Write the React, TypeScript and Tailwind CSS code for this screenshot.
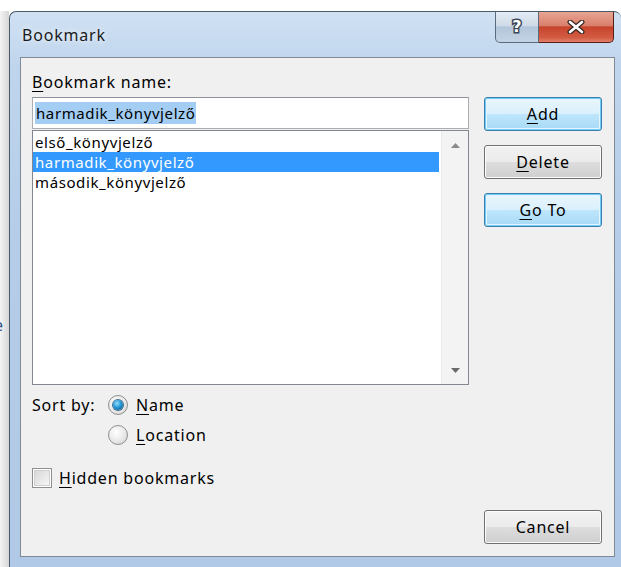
import { useState } from "react";

const bookmarks = ["első_könyvjelző", "harmadik_könyvjelző", "második_könyvjelző"];

// accelerator letter, underlined like a Win32 mnemonic
function Acc({ children }: { children: string }) {
  return <u className="underline decoration-1 underline-offset-[3px]">{children}</u>;
}

function Button({
  children,
  focused = false,
}: {
  children: React.ReactNode;
  focused?: boolean;
}) {
  return (
    <button
      className={
        focused
          ? "h-[34px] w-full rounded-[3px] border border-[#3c7fb1] bg-[linear-gradient(#eaf6fd_0%,#d9f0fc_50%,#bee6fd_51%,#a7d9f5_100%)] text-[16px] tracking-[0.8px] text-black shadow-[inset_0_0_0_1px_#6fcdf5,inset_0_0_0_2px_#e6f5fc]"
          : "h-[34px] w-full rounded-[3px] border border-[#707070] bg-[linear-gradient(#f2f2f2_0%,#ebebeb_50%,#dddddd_51%,#cfcfcf_100%)] text-[16px] tracking-[0.8px] text-black shadow-[inset_0_0_0_1px_#fcfcfc]"
      }
    >
      {children}
    </button>
  );
}

function Radio({ checked, label }: { checked: boolean; label: React.ReactNode }) {
  return (
    <div className="flex h-[20px] items-center gap-[8px]">
      <span className="flex h-[20px] w-[20px] items-center justify-center rounded-full border border-[#8e8f8f] bg-[radial-gradient(circle_at_40%_35%,#ffffff,#e6e6e6_60%,#c8c8c8)]">
        {checked && (
          <span className="h-[10px] w-[10px] rounded-full bg-[radial-gradient(circle_at_40%_35%,#8fe0ff,#1f8fcf_50%,#0b4f7d)] shadow-[0_0_0_1px_#3d6f8f]" />
        )}
      </span>
      <span>{label}</span>
    </div>
  );
}

export default function App() {
  const [selected, setSelected] = useState(1);
  const [sort, setSort] = useState("name");

  return (
    <div className="flex h-[567px] w-[621px] flex-col overflow-hidden bg-white font-['Noto_Sans',sans-serif] text-[16px] leading-[20px] tracking-[0.8px] text-black">
      <div className="h-[11px] shrink-0 bg-white" />
      <div className="flex flex-1">
        {/* page behind the dialog, mostly hidden by the drop shadow */}
        <div className="w-[9px] shrink-0 overflow-hidden bg-[linear-gradient(90deg,#f4f4f4,#d6d6d6)] pt-[304px]">
          <span className="-ml-[6px] block text-[#2b4f86]">e</span>
        </div>

        {/* dialog window */}
        <div className="flex flex-1 flex-col rounded-t-[7px] border border-b-0 border-r-0 border-[#4b5a6a] bg-[linear-gradient(180deg,#d0e1f3_0%,#bfd5ed_10%,#b5cde9_40%,#afc9e6_100%)]">
          {/* title bar */}
          <div className="flex h-[45px] shrink-0 justify-between">
            <div className="pl-[12px] pt-[13px] text-[#1b1b1b] [text-shadow:0_0_6px_#ffffff]">
              Bookmark
            </div>
            <div className="mr-[7px] flex h-[31px]">
              <div className="flex w-[44px] items-center justify-center rounded-bl-[5px] border border-t-0 border-[#5b6b7c] bg-[linear-gradient(#e3ebf4_0%,#cfdbe8_45%,#b3c5d9_50%,#c4d4e4_100%)] font-['DejaVu_Sans',sans-serif] text-[16px] font-bold tracking-normal text-white [-webkit-text-stroke:3px_#3c4856] [paint-order:stroke_fill]">
                ?
              </div>
              <div className="flex w-[75px] items-center justify-center rounded-br-[5px] border border-l-0 border-t-0 border-[#5a1e16] bg-[linear-gradient(#e8a493_0%,#d9806c_45%,#c7432c_50%,#d25c42_85%,#e0806a_100%)]">
                <svg width="20" height="14" viewBox="0 0 20 14">
                  <path d="M4 2 L16 12 M16 2 L4 12" stroke="#3a2622" strokeWidth="5" strokeLinecap="round" />
                  <path d="M4 2 L16 12 M16 2 L4 12" stroke="#ffffff" strokeWidth="2.6" strokeLinecap="round" />
                </svg>
              </div>
            </div>
          </div>

          {/* client area */}
          <div className="ml-[10px] flex h-[500px] w-[595px] flex-col border border-[#7f8a96] bg-[#f0f0f0] pb-[12px] pl-[11px] pt-[14px]">
            <div className="mb-[5px]">
              <Acc>B</Acc>ookmark name:
            </div>

            <div className="flex flex-1">
              <div className="flex w-[437px] flex-col">
                <div className="flex h-[32px] items-center border border-[#abadb3] border-t-[#8e9299] bg-white pl-[2px] text-[15px] tracking-[0.6px]">
                  <span className="bg-[#a3cdf3] px-[1px] leading-[22px]">harmadik_könyvjelző</span>
                </div>

                <div className="mt-[1px] flex h-[255px] border border-[#828790] bg-white text-[15px] tracking-[0.6px]">
                  <div className="flex-1 pt-[1px]">
                    {bookmarks.map((b, i) => (
                      <div
                        key={b}
                        onClick={() => setSelected(i)}
                        className={
                          i === selected
                            ? "h-[20px] bg-[#3399ff] pl-[2px] text-white"
                            : "h-[20px] pl-[2px]"
                        }
                      >
                        {b}
                      </div>
                    ))}
                  </div>
                  <div className="ml-[2px] flex w-[27px] flex-col items-center justify-between border-l border-[#e9e9e9] bg-[#f3f3f3] pb-[11px] pt-[12px]">
                    <svg width="9" height="5" viewBox="0 0 9 5">
                      <path d="M0 5 L4.5 0 L9 5 Z" fill="#8a8a8a" />
                    </svg>
                    <svg width="9" height="5" viewBox="0 0 9 5">
                      <path d="M0 0 L4.5 5 L9 0 Z" fill="#6a6a6a" />
                    </svg>
                  </div>
                </div>

                <div className="mt-[10px] flex">
                  <div className="w-[76px]">Sort by:</div>
                  <div className="flex flex-col gap-[10px]">
                    <div onClick={() => setSort("name")}>
                      <Radio
                        checked={sort === "name"}
                        label={
                          <>
                            <Acc>N</Acc>ame
                          </>
                        }
                      />
                    </div>
                    <div onClick={() => setSort("location")}>
                      <Radio
                        checked={sort === "location"}
                        label={
                          <>
                            <Acc>L</Acc>ocation
                          </>
                        }
                      />
                    </div>
                  </div>
                </div>

                <div className="mt-[23px] flex h-[20px] items-center gap-[7px]">
                  <span className="flex h-[20px] w-[20px] items-center justify-center border border-[#8e8f8f] bg-white">
                    <span className="h-[16px] w-[16px] border border-[#d0d0d0] bg-[linear-gradient(135deg,#d8d8d8,#f6f6f6)]" />
                  </span>
                  <span>
                    <Acc>H</Acc>idden bookmarks
                  </span>
                </div>
              </div>

              {/* command buttons */}
              <div className="ml-[15px] flex w-[118px] flex-col">
                <Button focused>
                  <Acc>A</Acc>dd
                </Button>
                <div className="mt-[14px]">
                  <Button>
                    <Acc>D</Acc>elete
                  </Button>
                </div>
                <div className="mt-[14px]">
                  <Button focused>
                    <Acc>G</Acc>o To
                  </Button>
                </div>
                <div className="mt-auto">
                  <Button>Cancel</Button>
                </div>
              </div>
            </div>
          </div>
        </div>
      </div>
    </div>
  );
}
